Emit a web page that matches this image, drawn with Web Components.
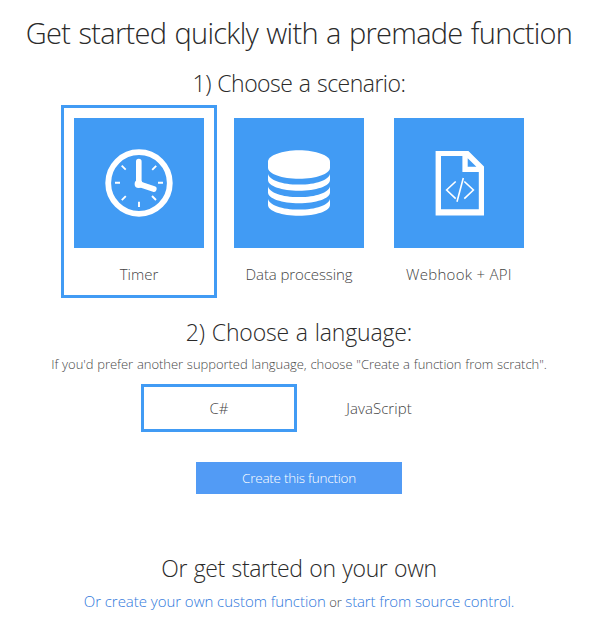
<!DOCTYPE html>
<html lang="en">
<head>
<meta charset="utf-8">
<title>Get started</title>
<style>
body { margin: 0; background: #fff; font-family: "Open Sans", "Noto Sans", sans-serif; font-weight: 300; color: #2a2a2a; }
</style>
</head>
<body>
<quick-start></quick-start>
<script>
const define = (name, html, setup) => customElements.define(name, class extends HTMLElement {
  constructor() {
    super();
    const t = document.createElement('template');
    t.innerHTML = html;
    this.attachShadow({ mode: 'open' }).append(t.content.cloneNode(true));
  }
  connectedCallback() { if (setup) setup(this, this.shadowRoot); }
});

define('qs-title', `<style>
  :host { display: block; text-align: center; }
  h1 { margin: 0; font: inherit; font-size: 29px; line-height: 40px; letter-spacing: -.71px; word-spacing: 1.4px; white-space: nowrap; }
</style><h1><slot></slot></h1>`);

define('qs-heading', `<style>
  :host { display: block; text-align: center; letter-spacing: var(--track, 0); word-spacing: 1px; }
  h2 { margin: 0; font: inherit; font-size: 23px; line-height: 30px; white-space: nowrap; }
</style><h2><slot></slot></h2>`);

const icons = {
  clock: `<g fill="none" stroke="#fff" stroke-linecap="round">
    <circle cx="65" cy="65" r="30.8" stroke-width="5.8"/>
    <path d="M64.8 43.6V66L79.8 71" stroke-width="5.6" stroke-linejoin="round"/>
    <path stroke-linecap="butt" stroke-width="1.9" d="M41 64.8h5M84 64.8h5M65 83.7V89M47.7 47.7l4 4M82.2 47.8l-4 4M47.8 82.2l4-4M82 82l-4-4"/></g>
    <circle cx="64.6" cy="66" r="4" fill="#fff"/>`,
  database: `<g fill="#fff"><path d="M34 43.8C34 37.5 48 32.3 65 32.3S96 37.5 96 43.8V49.7C96 55.8 82 60.7 65 60.7S34 55.8 34 49.7Z"/>
    <path d="M34 55.7C35 62 48 66.6 65 66.6S95 62 96 55.7V61.9C96 67.9 82 72.7 65 72.7S34 67.9 34 61.9Z"/>
    <path d="M34 68.2C35 74.5 48 79.1 65 79.1S95 74.5 96 68.2V74.4C96 80.4 82 85.2 65 85.2S34 80.4 34 74.4Z"/>
    <path d="M34 80.7C35 87 48 91.6 65 91.6S95 87 96 80.7V86.9C96 92.9 82 97.7 65 97.7S34 92.9 34 86.9Z"/></g>`,
  code: `<path fill="#fff" fill-rule="evenodd" d="M41.6 32.9H74.4L90 48.5V97.4H41.6ZM47 38V91.3H84.8V54H68.4V38ZM73.7 40.3V48.8H82.4Z"/>
    <path fill="none" stroke="#fff" stroke-width="1.6" d="M61.7 63.5L52.6 72L61.7 80.7M69.3 60L63 83.7M70.3 63.5L79.4 72L70.3 80.7"/>`
};

define('scenario-card', `<style>
  :host { display: block; box-sizing: border-box; width: 156px; height: 193px; border: 3px solid transparent; padding: 10px; text-align: center; }
  :host([selected]) { border-color: #419bf4; }
  .tile { width: 130px; height: 130px; background: #419bf4; }
  svg { display: block; }
  .label { margin-top: 16px; font-size: 15px; line-height: 20px; letter-spacing: var(--track, 0); white-space: nowrap; color: #444; }
</style><div class="tile"></div><div class="label"><slot></slot></div>`,
  (el, root) => { root.querySelector('.tile').innerHTML = `<svg width="130" height="130" viewBox="0 0 130 130">${icons[el.getAttribute('icon')]}</svg>`; });

define('language-option', `<style>
  :host { display: block; box-sizing: border-box; width: 156px; height: 48px; border: 3px solid transparent; text-align: center; font-size: 15px; line-height: 42px; color: #444; letter-spacing: var(--track, 0); }
  :host([selected]) { border-color: #419bf4; }
</style><slot></slot>`);

define('choice-row', `<style>
  :host { display: flex; justify-content: center; gap: 4px; }
</style><slot></slot>`);

define('qs-note', `<style>
  :host { display: block; text-align: center; font-size: 13px; line-height: 20px; letter-spacing: -.04px; word-spacing: .5px; white-space: nowrap; color: #484848; }
</style><slot></slot>`);

define('create-button', `<style>
  :host { display: block; width: 206px; }
  button { display: block; width: 100%; height: 32px; padding: 0; border: 0; border-radius: 0; background: #529bf5; color: #fff; font: inherit; font-size: 13.5px; letter-spacing: -.25px; line-height: 32px; }
</style><button><slot></slot></button>`);

define('text-link', `<style>
  a { color: #2f78dc; text-decoration: none; font-size: 15px; letter-spacing: var(--track, 0); }
</style><a href="#"><slot></slot></a>`);

define('quick-start', `<style>
  :host { display: flex; flex-direction: column; align-items: center; box-sizing: border-box; width: 598px; padding-top: 13px; }
  .scenario { margin-top: 15px; --track: -.52px; }
  .cards { margin-top: 7px; }
  .language { margin-top: 19px; --track: -.15px; }
  .note { margin-top: 7px; }
  .languages { margin-top: 10px; }
  create-button { margin-top: 30px; }
  .own { margin-top: 59px; --track: -.35px; }
  .links { margin-top: 8px; height: 20px; line-height: 20px; font-size: 13px; white-space: nowrap; color: #484848; }
</style>
<qs-title>Get started quickly with a premade function</qs-title>
<qs-heading class="scenario">1) Choose a scenario:</qs-heading>
<choice-row class="cards">
  <scenario-card icon="clock" selected>Timer</scenario-card>
  <scenario-card icon="database" style="--track:-.1px">Data processing</scenario-card>
  <scenario-card icon="code" style="--track:.28px">Webhook + API</scenario-card>
</choice-row>
<qs-heading class="language">2) Choose a language:</qs-heading>
<qs-note class="note">If you'd prefer another supported language, choose "Create a function from scratch".</qs-note>
<choice-row class="languages">
  <language-option selected>C#</language-option>
  <language-option style="--track:.05px">JavaScript</language-option>
</choice-row>
<create-button>Create this function</create-button>
<qs-heading class="own">Or get started on your own</qs-heading>
<div class="links"><text-link style="--track:-.04px">Or create your own custom function</text-link> or <text-link style="--track:-.12px">start from source control.</text-link></div>`);
</script>
</body>
</html>
